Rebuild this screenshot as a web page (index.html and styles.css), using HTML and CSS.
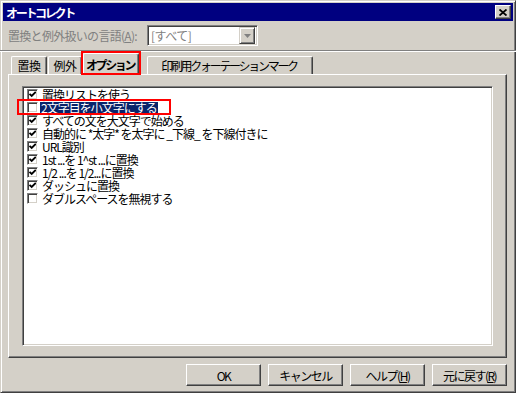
FILE: index.html
```html
<!DOCTYPE html>
<html lang="ja">
<head>
    <meta charset="UTF-8">
    <meta name="viewport" content="width=device-width, initial-scale=1.0">
    <title>オートコレクト</title>
    <link rel="stylesheet" href="styles.css">
</head>
<body>
    <div class="window">

        <div class="titlebar">
            <span class="title">オートコレクト</span>
            <span class="close">
                <svg width="8" height="7" viewBox="0 0 8 7"><path d="M0.5 0.5 L7.5 6.5 M7.5 0.5 L0.5 6.5" stroke="#000" stroke-width="1.8" fill="none"/></svg>
            </span>
        </div>

        <div class="lang-row">
            <div class="lang-label">置換と例外扱いの言語(<u>A</u>):</div>
            <div class="combo">
                <span class="combo-text">[すべて]</span>
                <span class="combo-btn">
                    <svg width="7" height="4" viewBox="0 0 7 4"><path d="M0 0 H7 L3.5 4 Z" fill="#808080"/></svg>
                </span>
            </div>
        </div>

        <div class="separator"></div>

        <div class="tabs">
            <div class="tab t1">置換</div>
            <div class="tab t2">例外</div>
            <div class="tab selected">オプション</div>
            <div class="tab wide">印刷用クォーテーションマーク</div>
        </div>

        <div class="panel">
            <div class="listbox">
                <div class="item"><span class="check on"></span><span class="label">置換リストを使う</span></div>
                <div class="item marked"><span class="check"></span><span class="label hilite">2文字目を小文字にする</span></div>
                <div class="item"><span class="check on"></span><span class="label">すべての文を大文字で始める</span></div>
                <div class="item"><span class="check on"></span><span class="label">自動的に *太字* を太字に _下線_ を下線付きに</span></div>
                <div class="item"><span class="check on"></span><span class="label">URL識別</span></div>
                <div class="item"><span class="check on"></span><span class="label">1st ...を 1^st ...に置換</span></div>
                <div class="item"><span class="check on"></span><span class="label">1/2 ...を 1/2...に置換</span></div>
                <div class="item"><span class="check on"></span><span class="label">ダッシュに置換</span></div>
                <div class="item"><span class="check"></span><span class="label">ダブルスペースを無視する</span></div>
            </div>
        </div>

        <div class="buttons">
            <div class="btn">OK</div>
            <div class="btn">キャンセル</div>
            <div class="btn">ヘルプ(<u>H</u>)</div>
            <div class="btn">元に戻す(<u>R</u>)</div>
        </div>

    </div>
</body>
</html>
```
FILE: styles.css
```css
body{
    margin: 0;
    font-family: "Noto Sans CJK JP", "Liberation Sans", sans-serif;
    font-size: 12px;
    color: #000;
}
.window{
    width: 516px;
    height: 393px;
    box-sizing: border-box;
    background: #d4d0c8;
    border: 1px solid;
    border-color: #d4d0c8 #404040 #404040 #d4d0c8;
    box-shadow: inset 1px 1px #fff, inset -1px -1px #808080;
    padding: 2px;
    display: flex;
    flex-direction: column;
}
.titlebar{
    height: 18px;
    background: #000080;
    display: flex;
    align-items: center;
    justify-content: space-between;
    padding: 0 2px 0 3px;
}
.title{
    color: #fff;
    font-weight: bold;
    font-size: 12px;
    letter-spacing: -2.3px;
}
.close{
    width: 16px;
    height: 14px;
    box-sizing: border-box;
    background: #d4d0c8;
    border: 1px solid;
    border-color: #fff #404040 #404040 #fff;
    box-shadow: inset -1px -1px #808080;
    display: flex;
    align-items: center;
    justify-content: center;
}

.lang-row{
    display: flex;
    align-items: center;
    height: 21px;
    margin-top: 4px;
    padding-left: 5px;
}
.lang-label{
    width: 139px;
    color: #808080;
    letter-spacing: -0.7px;
}
.combo{
    width: 111px;
    height: 21px;
    box-sizing: border-box;
    background: #fff;
    border: 1px solid;
    border-color: #808080 #fff #fff #808080;
    box-shadow: inset 1px 1px #404040, inset -1px -1px #d4d0c8;
    display: flex;
    align-items: center;
    justify-content: space-between;
    padding: 2px;
}
.combo-text{
    color: #808080;
    padding-left: 1px;
    letter-spacing: -0.5px;
}
.combo-btn{
    width: 16px;
    height: 17px;
    box-sizing: border-box;
    background: #d4d0c8;
    border: 1px solid;
    border-color: #d4d0c8 #404040 #404040 #d4d0c8;
    box-shadow: inset 1px 1px #fff, inset -1px -1px #808080;
    display: flex;
    align-items: center;
    justify-content: center;
}

.separator{
    margin: 4px -3px 0;
    height: 1px;
    background: #808080;
    border-bottom: 1px solid #fff;
}

.tabs{
    display: flex;
    align-items: flex-end;
    height: 22px;
    padding-left: 8px;
    position: relative;
    z-index: 2;
}
.tab{
    height: 18px;
    box-sizing: border-box;
    border: 1px solid;
    border-bottom: none;
    border-color: #fff #404040 #fff #fff;
    box-shadow: inset -1px 0 #808080;
    border-radius: 2px 2px 0 0;
    display: flex;
    align-items: center;
    justify-content: center;
    letter-spacing: -0.5px;
}
.tab.t1{
    width: 36px;
    margin-right: 1px;
}
.tab.t2{
    width: 34px;
}
.tab.selected{
    width: 56px;
    height: 22px;
    margin: 0 0 -1px 1px;
    font-weight: bold;
    background: #d4d0c8;
    position: relative;
    letter-spacing: -2.4px;
    padding-right: 2px;
}
.tab.selected::after{
    content: "";
    position: absolute;
    left: -3px;
    right: -3px;
    top: -3px;
    bottom: 0;
    border: 2px solid #f00;
}
.tab.wide{
    width: 166px;
    margin-left: 8px;
    letter-spacing: -2.3px;
    padding-right: 2px;
}

.panel{
    margin-left: 5px;
    width: 499px;
    height: 284px;
    box-sizing: border-box;
    border: 1px solid;
    border-color: #fff #404040 #404040 #fff;
    box-shadow: inset -1px -1px #808080;
    padding: 11px 0 0 13px;
}
.listbox{
    width: 471px;
    height: 260px;
    box-sizing: border-box;
    background: #fff;
    border: 1px solid;
    border-color: #808080 #fff #fff #808080;
    box-shadow: inset 1px 1px #404040, inset -1px -1px #d4d0c8;
    padding: 1px 2px;
}
.item{
    height: 13px;
    display: flex;
    align-items: center;
    position: relative;
    line-height: 13px;
}
.check{
    width: 11px;
    height: 11px;
    box-sizing: border-box;
    margin-left: 2px;
    border: 1px solid;
    border-color: #808080 #fff #fff #808080;
    box-shadow: inset 1px 1px #404040, inset -1px -1px #d4d0c8;
    background: #fff;
}
.check.on{
    background: #fff url("data:image/svg+xml,%3Csvg xmlns='http://www.w3.org/2000/svg' width='9' height='9'%3E%3Cpath d='M1.5 3.8 L3.7 6 L7.8 1.8' stroke='%23000' stroke-width='1.9' fill='none'/%3E%3C/svg%3E") no-repeat center;
}
.label{
    margin-left: 2px;
    padding: 0 2px;
    letter-spacing: -1px;
    height: 13px;
}
.label.hilite{
    background: #0a246a;
    color: #fff;
    height: 12px;
    line-height: 12px;
    padding: 0 1px;
}
.item.marked::after{
    content: "";
    position: absolute;
    left: -8px;
    width: 154px;
    top: -2px;
    height: 16px;
    box-sizing: border-box;
    border: 2px solid #f00;
}

.buttons{
    display: flex;
    justify-content: flex-end;
    gap: 7px;
    margin-top: 6px;
    padding-right: 6px;
}
.btn{
    width: 75px;
    height: 22px;
    box-sizing: border-box;
    border: 1px solid;
    border-color: #fff #404040 #404040 #fff;
    box-shadow: inset -1px -1px #808080;
    display: flex;
    align-items: center;
    justify-content: center;
    letter-spacing: -1.5px;
}
```
